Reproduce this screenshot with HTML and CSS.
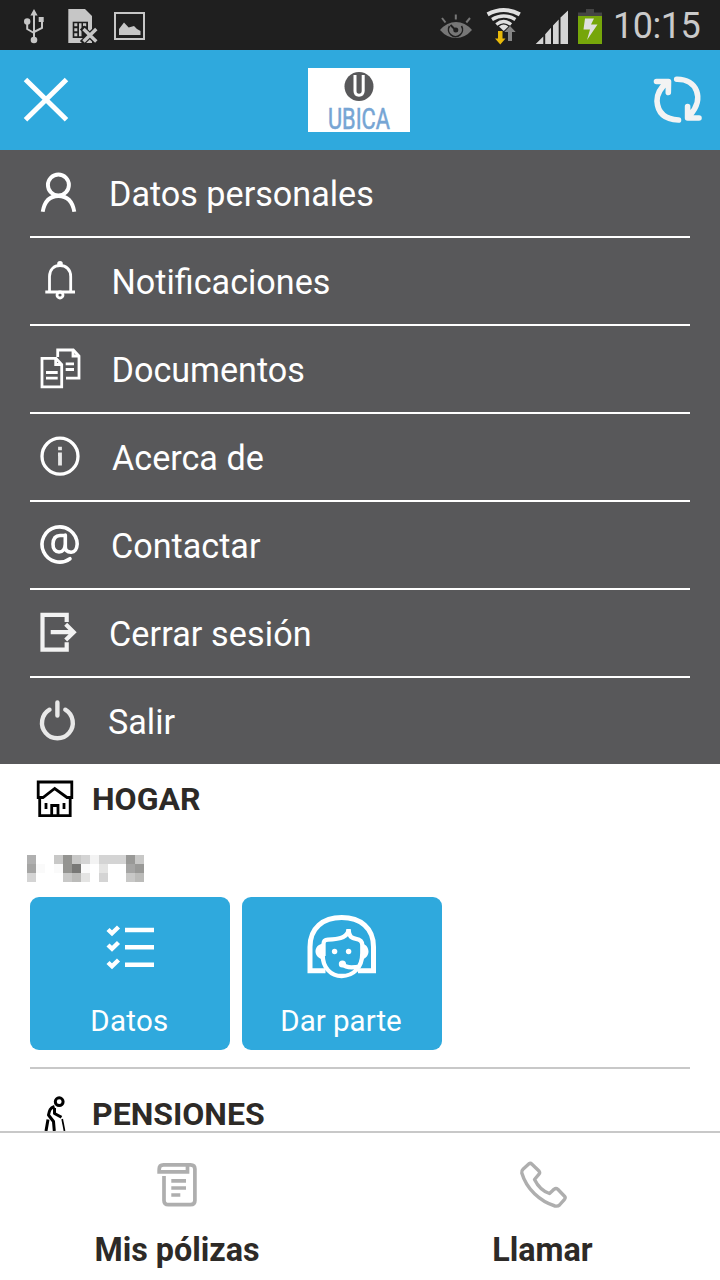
FILE: index.html
```html
<!DOCTYPE html>
<html lang="es">
<head>
<meta charset="utf-8">
<title>Ubica</title>
<link rel="stylesheet" href="styles.css">
</head>
<body>
<div class="screen">
  <div class="status">
    <div class="status-left">
      <svg width="30" height="50" viewBox="20 0 30 50" fill="none" stroke="#c6c6c6" stroke-width="2">
        <path d="M34 13V39M34 33L27.2 29V22M34 32L42 28V20"/>
        <path d="M34 9l3.600 6.500h-7.200zM38.700 17h5v5h-5z" fill="#c6c6c6" stroke="none"/>
        <circle cx="27.200" cy="21.500" r="3.200" fill="#c6c6c6" stroke="none"/>
        <circle cx="34" cy="40" r="3.300" fill="#c6c6c6" stroke="none"/>
      </svg>
      <svg width="50" height="50" viewBox="60 0 50 50">
        <path d="M68.300 9H85l7 7v27H68.300z" fill="#c6c6c6"/>
        <path d="M72.700 21.700H88V38H72.700z" fill="#1f1f1f"/>
        <path d="M74.300 23.300h3v3h-3zm0 5h3v3h-3zm0 5h3v3h-3zM79 23.300h2.500v13H79zM83 23.300h3.200v3H83zm0 5h3.200v3H83z" fill="#c6c6c6"/>
        <path d="M82 27.500L97.500 43M97.500 27.500L82 43" stroke="#1f1f1f" stroke-width="6"/>
        <path d="M83.500 29L96.300 41.500M96.300 29L83.500 41.500" stroke="#c6c6c6" stroke-width="3.400"/>
      </svg>
      <svg width="40" height="50" viewBox="110 0 40 50">
        <rect x="115" y="13" width="29" height="26" fill="none" stroke="#c6c6c6" stroke-width="2"/>
        <path d="M119 35v-6l5-6.500 4.700 5 5.300-1.500 3 3 3.500 2v4z" fill="#c6c6c6"/>
      </svg>
    </div>
    <div class="status-right">
      <svg width="40" height="50" viewBox="436 0 40 50" fill="none" stroke="#777">
        <path d="M440 30Q447 22 456 22T472 30Q465 38 456 38T440 30z" fill="#777" stroke="none"/>
        <path d="M449.500 26A7 7 0 1 0 461.500 26" stroke="#1f1f1f" stroke-width="1.600"/>
        <path d="M455.500 30L450.500 25" stroke="#1f1f1f" stroke-width="2"/>
        <circle cx="455.800" cy="30" r="2.500" fill="#1f1f1f" stroke="none"/>
        <path d="M442 18l3.500 4.500M455.800 14.500v5M470 18l-3.700 4.500" stroke-width="2"/>
      </svg>
      <svg width="50" height="50" viewBox="478 0 50 50" fill="none" stroke="#e0e0e0">
        <path d="M487.600 14.300Q503.700 5.700 519.800 14.300" stroke-width="4.200"/>
        <path d="M492 19.500Q503.700 12.500 515.400 19.500" stroke-width="3.600"/>
        <path d="M496.300 24.500Q503.700 18.500 511.100 24.500" stroke-width="3.200"/>
        <path d="M499 26.500Q503.700 22.500 508.400 26.500L503.700 31z" fill="#e0e0e0" stroke="none"/>
        <path d="M498 31h4.500v7.500h3l-5.200 6-5.300-6h3z" fill="#e8b90a" stroke="none"/>
        <path d="M510 26l5.700 6H512v9h-4v-9h-3.700z" fill="#858585" stroke="none"/>
      </svg>
      <svg width="44" height="50" viewBox="530 0 44 50" fill="#d4d4d4">
        <path d="M535.700 44L543.300 36.500V44zM545.200 44V34.200L551 27.800V44zM553 44V25.500L558.700 19.500V44zM560.500 44V17.600L568 10.500V44z"/>
      </svg>
      <svg width="34" height="50" viewBox="574 0 34 50">
        <path d="M586 9h8v3.500h8V16h-24v-3.500h8z" fill="#444"/>
        <path d="M578 16h24v28h-24z" fill="#76a60a"/>
        <path d="M585 18.500h9l-3 6h6.500L587 40l3-10.500h-6.500z" fill="#e0e0e0"/>
      </svg>
      <span class="clock">10:15</span>
    </div>
  </div>

  <header class="header">
    <svg width="80" height="100" viewBox="0 50 80 100" stroke="#fff" stroke-width="5"><path d="M25.500 79.500L66.500 119.800M66.500 79.500L25.500 119.800"/></svg>
    <svg class="logo" width="102" height="64" viewBox="0 0 102 64">
      <rect width="102" height="64" fill="#fff"/>
      <circle cx="51" cy="18.500" r="14.500" fill="#58585a"/>
      <path d="M47 7V23Q47 27.200 51 27.200T55.200 23V7" fill="none" stroke="#fff" stroke-width="3"/>
      <text class="logo-text" x="20" y="60.700" textLength="62" lengthAdjust="spacingAndGlyphs">UBICA</text>
    </svg>
    <svg width="80" height="100" viewBox="640 50 80 100" fill="none" stroke="#f3f3f3" stroke-width="5.600" stroke-linecap="round" stroke-linejoin="round">
      <path d="M656.500 81.500H668.500L668.300 92.500M667 82.500Q657 90.500 657 101Q658 119 678.500 120"/>
      <path d="M676.700 79.300C697 79 705 99 690 115M687.600 106.500V118H699"/>
    </svg>
  </header>

  <nav class="menu">
    <div class="item i1"><svg width="60" height="86" viewBox="0 0 60 86"><circle cx="28.400" cy="35" r="10.500"/><path d="M12.700 61.800C14.500 51 20 46 28.400 46S42.500 51 44.300 61.800"/></svg><span>Datos personales</span></div>
    <div class="item i2"><svg width="60" height="86" viewBox="0 0 60 86"><path d="M19.500 53.500V38.500C19.500 31.500 24 27.500 30 27.500S40.700 31.500 40.700 38.500V53.500M15.300 54H45"/><circle cx="30" cy="25.700" r="2.800" class="solid"/><circle cx="30" cy="57" r="3"/></svg><span>Notificaciones</span></div>
    <div class="item i3"><svg width="60" height="86" viewBox="0 0 60 86"><path d="M12 32.300H26L31.700 38.500V60.800H12zM25.700 32.300V38.500H31.700M27.700 31V24H43.300L49 30V52.200H36M43 24V30H49M16 46.500H27.700M16 52.200H27.700M35.700 37.800H44M35.700 43.500H44"/></svg><span>Documentos</span></div>
    <div class="item i4"><svg width="60" height="86" viewBox="0 0 60 86"><circle cx="30" cy="42.200" r="18"/><path class="info" d="M30 32.800V36.300M28 40.300H30V51.500"/></svg><span>Acerca de</span></div>
    <div class="item i5"><svg width="60" height="86" viewBox="0 0 60 86"><path d="M40 56.700A17.600 17.600 0 1 1 47.200 42C46.800 48 44.500 50.300 41 50.200C37 50 35.300 48 35.300 45V33M35.300 42C35 47.500 32.500 50 29 50S22.800 47 23 42S25.500 33.500 30 33.500H35.300"/></svg><span>Contactar</span></div>
    <div class="item i6"><svg width="60" height="86" viewBox="0 0 60 86"><path d="M36.700 32V24.900H12.500V59.600H36.700V52.300M20.700 42.200H43M35.700 34.300L43.700 42.200L35.700 50"/></svg><span>Cerrar sesión</span></div>
    <div class="item i7"><svg width="60" height="86" viewBox="0 0 60 86"><path d="M27.400 24.500V37.500M19.500 31.700A15.400 15.400 0 1 0 35.300 31.700"/></svg><span>Salir</span></div>
  </nav>

  <main class="content">
    <section class="policy">
      <h2><svg width="62" height="50" viewBox="30 774 62 50" fill="none" stroke="#000" stroke-width="2.800">
        <path d="M38.200 782H71.800V797.500H67L54.700 788.500L43 797.500H38.200zM39.700 797.500V815.600H70.200V797.500M51.700 815.600V805.500H58V815.600M46 803V809M64 803V809"/></svg><span>HOGAR</span></h2>
      <svg class="masked" width="117" height="27" viewBox="0 0 13 3" shape-rendering="crispEdges">
        <path fill="#b0b0b0" d="M0 0h1v1H0z"/><path fill="#a5a5a4" d="M0 1h1v1H0zM11 1h1v1h-1z"/><path fill="#d4d4d4" d="M0 2h1v1H0zM6 0h1v1H6zM8 0h3v1H8zM8 2h1v1H8z"/>
        <path fill="#c8c8c7" d="M3 0h1v1H3zM5 0h1v1H5zM12 0h1v1h-1zM4 2h1v1H4zM11 2h1v1h-1z"/><path fill="#949491" d="M4 0h1v2H4z"/><path fill="#787876" d="M5 1h1v1H5z"/>
        <path fill="#bbbbb9" d="M5 2h1v1H5zM12 2h1v1h-1z"/><path fill="#e4e4e3" d="M6 2h1v1H6zM8 1h1v1H8z"/><path fill="#f3f3f3" d="M7 0h1v1H7z"/><path fill="#999997" d="M11 0h1v1h-1zM12 1h1v1h-1z"/><path fill="#fafafa" d="M1 1h1v1H1zM3 1h1v1H3zM6 1h1v1H6z"/>
      </svg>
      <div class="tiles">
        <div class="tile"><svg width="200" height="100" viewBox="0 0 200 100" stroke-width="4.400"><path d="M95 33H124M95 50.300H124M95 67.700H124"/><path d="M78 32.500L82 36.300L88.500 30M78 48L82 51.800L88.500 45.500M78 65.500L82 69.300L88.500 63"/></svg><span class="t1">Datos</span></div>
        <div class="tile"><svg width="200" height="100" viewBox="0 0 200 100" stroke-width="5">
          <path d="M83.500 73.700H68V50C68 31 81 20.600 99.700 20.600S131.500 31 131.500 50V73.700H116"/>
          <path stroke-width="4.300" d="M81.500 59V47C81.500 43.500 83 42.700 86 42.600C94 42.300 104.500 42 106.600 33.300C107.200 40 110 41.200 114 41.800C118.500 42.500 120.300 44.500 120.300 48V56C120.300 71 111 79 99.700 79C89 79 80.700 71 80.700 58M101 67.300C103 70.300 109 71 118 69.500"/>
          <g stroke="none" fill="#fff"><path d="M81 46.500C75.500 47.500 73.500 51 73.500 54.500S76 61.500 82 63zM120 46.500C124.500 47.500 126.500 51 126.500 54.500S124.500 61.500 119 63zM104.300 32h4.500v7h-4.500z"/><circle cx="92.600" cy="54.500" r="2.700"/><circle cx="106.600" cy="54.500" r="2.700"/><circle cx="100.400" cy="67" r="3.600"/></g>
        </svg><span class="t2">Dar parte</span></div>
      </div>
    </section>
    <section class="policy second">
      <h2><svg width="62" height="50" viewBox="30 1089 62 50" fill="none" stroke="#000" stroke-width="3" stroke-linejoin="round">
        <circle cx="59.200" cy="1101.700" r="3.900"/><path d="M54.500 1106.500C50 1108 49.500 1110 48.500 1115L53.500 1121.500L54.300 1131M48 1119.500L46 1131M54.500 1108V1113.500L61.500 1117.300"/><path d="M62.200 1119L64.500 1131" stroke-width="1.700"/></svg><span>PENSIONES</span></h2>
    </section>
  </main>

  <footer class="tabs">
    <div class="tab f1"><svg width="60" height="60" viewBox="147 1155 60 60" fill="none" stroke="#aeaeae" stroke-width="3.700">
      <path d="M159.200 1172.300V1169Q159.200 1164.800 163.500 1164.800H190.500Q194.900 1164.800 194.900 1169V1200.500Q194.900 1204.700 190.500 1204.700H168.500Q164 1204.700 164 1200.500V1176M157.300 1171.900H187.500V1165"/><path d="M171.300 1180.800H186M171.300 1188H186M171.300 1195H180.300"/></svg><span>Mis pólizas</span></div>
    <div class="tab f2"><svg width="60" height="60" viewBox="512 1155 60 60" fill="none" stroke="#aeaeae" stroke-width="3.400" stroke-linejoin="round">
      <path d="M528 1163.700Q529.500 1162.800 531 1164.200L538 1171Q539.300 1172.700 538 1174.200L533.500 1179.500Q539 1190.500 548.500 1193.500L553 1189.300Q555 1187.800 556.800 1189.300L563.500 1196.200Q564.800 1197.700 563.500 1199.300L558.500 1205Q557 1206.500 554 1206C539 1201.500 525.500 1189 520.800 1173Q520.300 1170.700 522 1169.200z"/></svg><span>Llamar</span></div>
  </footer>
</div>
</body>
</html>
```
FILE: styles.css
```css
* { box-sizing: border-box; }
body { margin: 0; font-family: Roboto, "Noto Sans", sans-serif; background: #fff; }
svg { display: block; flex: none; }
.screen { width: 720px; height: 1280px; display: flex; flex-direction: column; overflow: hidden; }

.status { height: 50px; flex: none; background: #1f1f1f; display: flex; justify-content: space-between; }
.status-left { display: flex; padding-left: 20px; }
.status-left svg:nth-child(2) { margin-left: 10px; }
.status-right { display: flex; }
.status-right svg:nth-child(2), .status-right svg:nth-child(3) { margin-left: 2px; }
.clock { width: 112px; padding-left: 5px; line-height: 52px; font-size: 36px; letter-spacing: -0.5px; color: #cacaca; white-space: nowrap; }

.header { height: 100px; flex: none; background: #2fa9dd; display: flex; justify-content: space-between; align-items: center; }
.logo { margin-right: 2px; }
.logo-text { font-size: 30px; fill: #76a5d4; stroke: #76a5d4; stroke-width: 0.6px; }

.menu { height: 614px; flex: none; background: #58585a; padding: 0 30px; }
.item { height: 88px; display: flex; align-items: center; border-bottom: 2px solid #fff; font-size: 34.15px; color: #fff; white-space: nowrap; }
.item:last-child { height: 86px; border-bottom: 0; }
.item span { padding-top: 1px; }
.item svg { fill: none; stroke: #fff; stroke-width: 3.9; }
.item .solid { fill: #fff; stroke: none; }
.item .info { stroke-width: 3.8; stroke: #e8e8e8; }
.i2 svg, .i3 svg { stroke-width: 2.8; }
.i4 svg { stroke-width: 3.3; }
.i5 svg { stroke-linecap: round; stroke-width: 3.6; }
.i6 svg { stroke: #f2f2f2; stroke-width: 4.2; }
.i7 svg { stroke: #e8e8e8; stroke-width: 4.4; stroke-linecap: round; }
.i1 span { margin-left: 19px; }
.i2 span { margin-left: 21.5px; }
.i3 span { margin-left: 21.5px; }
.i4 span { margin-left: 22px; }
.i5 span { margin-left: 21px; }
.i6 span { margin-left: 19px; }
.i7 span { margin-left: 18px; }
.i6 { letter-spacing: 0.1px; }

.content { flex: 1; min-height: 0; overflow: hidden; padding: 10px 30px 0; color: #2d2a27; }
.policy { border-bottom: 2px solid #c8c8c8; height: 295px; }
.policy h2 { margin: 0; height: 50px; display: flex; align-items: center; font-size: 32px; font-weight: 700; }
.policy h2 span { line-height: 34px; }
.second { padding-top: 20px; border: 0; }
.masked { margin: 31px 0 15px -3px; }
.tiles { display: flex; gap: 12px; }
.tile { width: 200px; height: 153px; border-radius: 9px; background: #2fa9dd; color: #fff; font-size: 29.5px; text-align: center; }
.tile svg { fill: none; stroke: #fff; }
.tile span { display: block; line-height: 34px; margin-top: 7px; }
.t1 { letter-spacing: 0.3px; padding-right: 1px; }
.t2 { padding-right: 2px; }

.tabs { height: 149px; flex: none; border-top: 2px solid #c8c8c8; background: #fff; display: grid; grid-template-columns: 354px 1fr; color: #2d2a27; font-size: 32.3px; font-weight: 700; }
.tab { display: flex; flex-direction: column; align-items: center; padding-top: 22px; }
.tab span { margin-top: 16px; line-height: 39px; }
.f2 { padding-left: 11px; }
```
